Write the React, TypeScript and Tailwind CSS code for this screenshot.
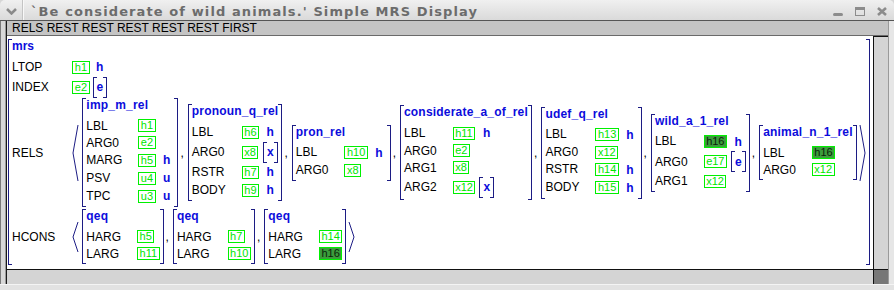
import React from "react";

type Row = { l: string; v: string; t?: string; br?: boolean; hl?: boolean };
type Box = { title: string; rows: Row[] };

const rels: Box[] = [
  {
    title: "imp_m_rel",
    rows: [
      { l: "LBL", v: "h1" },
      { l: "ARG0", v: "e2" },
      { l: "MARG", v: "h5", t: "h" },
      { l: "PSV", v: "u4", t: "u" },
      { l: "TPC", v: "u3", t: "u" },
    ],
  },
  {
    title: "pronoun_q_rel",
    rows: [
      { l: "LBL", v: "h6", t: "h" },
      { l: "ARG0", v: "x8", t: "x", br: true },
      { l: "RSTR", v: "h7", t: "h" },
      { l: "BODY", v: "h9", t: "h" },
    ],
  },
  {
    title: "pron_rel",
    rows: [
      { l: "LBL", v: "h10", t: "h" },
      { l: "ARG0", v: "x8" },
    ],
  },
  {
    title: "considerate_a_of_rel",
    rows: [
      { l: "LBL", v: "h11", t: "h" },
      { l: "ARG0", v: "e2" },
      { l: "ARG1", v: "x8" },
      { l: "ARG2", v: "x12", t: "x", br: true },
    ],
  },
  {
    title: "udef_q_rel",
    rows: [
      { l: "LBL", v: "h13", t: "h" },
      { l: "ARG0", v: "x12" },
      { l: "RSTR", v: "h14", t: "h" },
      { l: "BODY", v: "h15", t: "h" },
    ],
  },
  {
    title: "wild_a_1_rel",
    rows: [
      { l: "LBL", v: "h16", t: "h", hl: true },
      { l: "ARG0", v: "e17", t: "e", br: true },
      { l: "ARG1", v: "x12" },
    ],
  },
  {
    title: "animal_n_1_rel",
    rows: [
      { l: "LBL", v: "h16", hl: true },
      { l: "ARG0", v: "x12" },
    ],
  },
];

const hcons: Box[] = [
  { title: "qeq", rows: [{ l: "HARG", v: "h5" }, { l: "LARG", v: "h11" }] },
  { title: "qeq", rows: [{ l: "HARG", v: "h7" }, { l: "LARG", v: "h10" }] },
  { title: "qeq", rows: [{ l: "HARG", v: "h14" }, { l: "LARG", v: "h16", hl: true }] },
];

function LBr() {
  return <div className="w-[4px] shrink-0 border-y border-l border-[#1c1c84]" />;
}

function RBr() {
  return <div className="w-[4px] shrink-0 border-y border-r border-[#1c1c84]" />;
}

function Val({ v, hl }: { v: string; hl?: boolean }) {
  return (
    <span
      className={
        hl
          ? "flex h-[13px] shrink-0 items-center whitespace-nowrap border border-[#00f000] bg-[#3c9c3c] px-[1.5px] text-[11px] leading-none text-[#0a1f0a]"
          : "flex h-[13px] shrink-0 items-center whitespace-nowrap border border-[#00f000] px-[1.5px] text-[11px] leading-none text-[#00e600]"
      }
    >
      {v}
    </span>
  );
}

function Typ({ t, br }: { t: string; br?: boolean }) {
  if (br)
    return (
      <div className="flex h-[21px]">
        <LBr />
        <span className="flex items-center text-[12px] font-bold text-[#0c0cdc]">{t}</span>
        <RBr />
      </div>
    );
  return <span className="pl-[3.5px] pr-[4px] text-[12px] font-bold text-[#0c0cdc]">{t}</span>;
}

function Avm({ box }: { box: Box }) {
  const typed = box.rows.some((r) => r.t);
  return (
    <div className="flex shrink-0">
      <LBr />
      <div className="pt-[1px] pb-[2px]">
        <div className="h-[18px] whitespace-nowrap text-[12px] font-bold leading-[12px] tracking-[0.2px] text-[#0c0cdc]">{box.title}</div>
        <div className={typed ? "grid grid-cols-[auto_auto_auto] justify-start" : "grid grid-cols-[auto_auto] justify-start"}>
          {box.rows.map((r) => (
            <React.Fragment key={r.l}>
              <div className={r.br ? "flex h-[22px] items-center pr-[16px] text-[12px]" : "flex h-[17px] items-center pr-[16px] text-[12px]"}>{r.l}</div>
              <div className="flex items-center">
                <Val v={r.v} hl={r.hl} />
              </div>
              {typed && <div className="flex items-center pl-[4px]">{r.t && <Typ t={r.t} br={r.br} />}</div>}
            </React.Fragment>
          ))}
        </div>
      </div>
      <RBr />
    </div>
  );
}

function Angle({ h, right }: { h: number; right?: boolean }) {
  const pts = right ? `1,0 6,${h / 2} 1,${h}` : `6,0 1,${h / 2} 6,${h}`;
  return (
    <svg width="7" height={h} className="shrink-0">
      <polyline points={pts} fill="none" stroke="#1c1c84" strokeWidth="1" />
    </svg>
  );
}

function List({ items, h }: { items: Box[]; h: number }) {
  return (
    <div className="flex items-center">
      <Angle h={h} />
      <div className="ml-[3px] mr-[2px] flex items-center">
        {items.map((b, i) => (
          <React.Fragment key={i}>
            {i > 0 && <span className="pl-[2px] pr-[4px] text-[12px] leading-[14px]">,</span>}
            <Avm box={b} />
          </React.Fragment>
        ))}
      </div>
      <Angle h={h} right />
    </div>
  );
}

function Mrs() {
  return (
    <div className="flex w-max">
      <LBr />
      <div className="pt-[1px] pb-[1px]">
        <div className="h-[18px] text-[12px] font-bold leading-[12px] text-[#0c0cdc]">mrs</div>
        <div className="grid grid-cols-[auto_auto] justify-start text-[12px]">
          <div className="flex h-[17px] items-center pr-[17px]">LTOP</div>
          <div className="flex items-center">
            <Val v="h1" />
            <span className="pl-[3px]">
              <Typ t="h" />
            </span>
          </div>
          <div className="flex h-[22px] items-center pr-[17px]">INDEX</div>
          <div className="flex items-center">
            <Val v="e2" />
            <span className="pl-[3px]">
              <Typ t="e" br />
            </span>
          </div>
          <div className="flex items-center pr-[17px]">RELS</div>
          <List items={rels} h={56} />
          <div className="mt-[2px] flex items-center pr-[17px]">HCONS</div>
          <div className="mt-[2px]">
            <List items={hcons} h={30} />
          </div>
        </div>
      </div>
      <RBr />
    </div>
  );
}

function TitleBar() {
  return (
    <div className="flex h-[20px] shrink-0 items-center rounded-t-[5px] bg-gradient-to-b from-[#f0f0f0] to-[#dadada]">
      <div className="flex w-[22px] justify-center pt-[2px]">
        <svg width="11" height="7">
          <polyline points="1,1 5.5,5.5 10,1" fill="none" stroke="#8a8a8a" strokeWidth="2.5" />
        </svg>
      </div>
      <div className="h-full w-px bg-[#c4c4c4]" />
      <div className="h-full w-px bg-[#f8f8f8]" />
      <div className="ml-[7px] mt-[3px] whitespace-nowrap font-['DejaVu_Sans',sans-serif] text-[13px] font-bold tracking-[1.1px] text-[#6c6c6c]">
        `Be considerate of wild animals.' Simple MRS Display
      </div>
      <div className="ml-auto mr-[7px] mt-[3px] flex items-center gap-[12px]">
        <div className="mt-[5px] h-[3px] w-[10px] rounded-[2px] bg-[#8c8c8c]" />
        <div className="h-[9px] w-[10px] border border-t-[3px] border-[#8c8c8c]" />
        <svg width="10" height="9">
          <path d="M1 1 L9 8 M9 1 L1 8" stroke="#8c8c8c" strokeWidth="2.6" />
        </svg>
      </div>
    </div>
  );
}

export default function App() {
  return (
    <div className="flex h-[290px] w-[894px] flex-col overflow-hidden bg-[#d6d6d6] font-['Liberation_Sans',Arial,sans-serif] text-black">
      <TitleBar />
      <div className="h-px shrink-0 bg-[#555555]" />
      <div className="flex min-h-0 flex-1">
        <div className="w-[6px] shrink-0 border-l border-r border-l-[#7a7a7a] border-r-[#9a9a9a] bg-[#d8d8d8]" />
        <div className="flex min-w-0 flex-1 flex-col border-l border-[#1a1a1a]">
          <div className="h-[15px] shrink-0 whitespace-nowrap border-b border-[#6a6a6a] bg-[#c4c4c4] pl-[5px] text-[12px] leading-[14px]">
            RELS REST REST REST REST REST FIRST
          </div>
          <div className="flex min-h-0 flex-1">
            <div className="min-w-0 flex-1 overflow-hidden bg-white pl-[1px] pt-[3px]">
              <Mrs />
            </div>
            <div className="w-[15px] shrink-0 border-l border-t border-[#111111] bg-[#d4d4d4]" />
          </div>
          <div className="flex h-[15px] shrink-0">
            <div className="flex-1 border-t border-[#111111] bg-[#d4d4d4]" />
            <div className="w-[15px] shrink-0 border-l border-t border-[#111111] bg-[#777777]" />
          </div>
        </div>
        <div className="w-[6px] shrink-0 border-l border-[#9a9a9a] bg-[#e6e6e6]" />
      </div>
      <div className="h-[6px] shrink-0 border-t border-[#f4f4f4] bg-[#e2e2e2]" />
    </div>
  );
}
